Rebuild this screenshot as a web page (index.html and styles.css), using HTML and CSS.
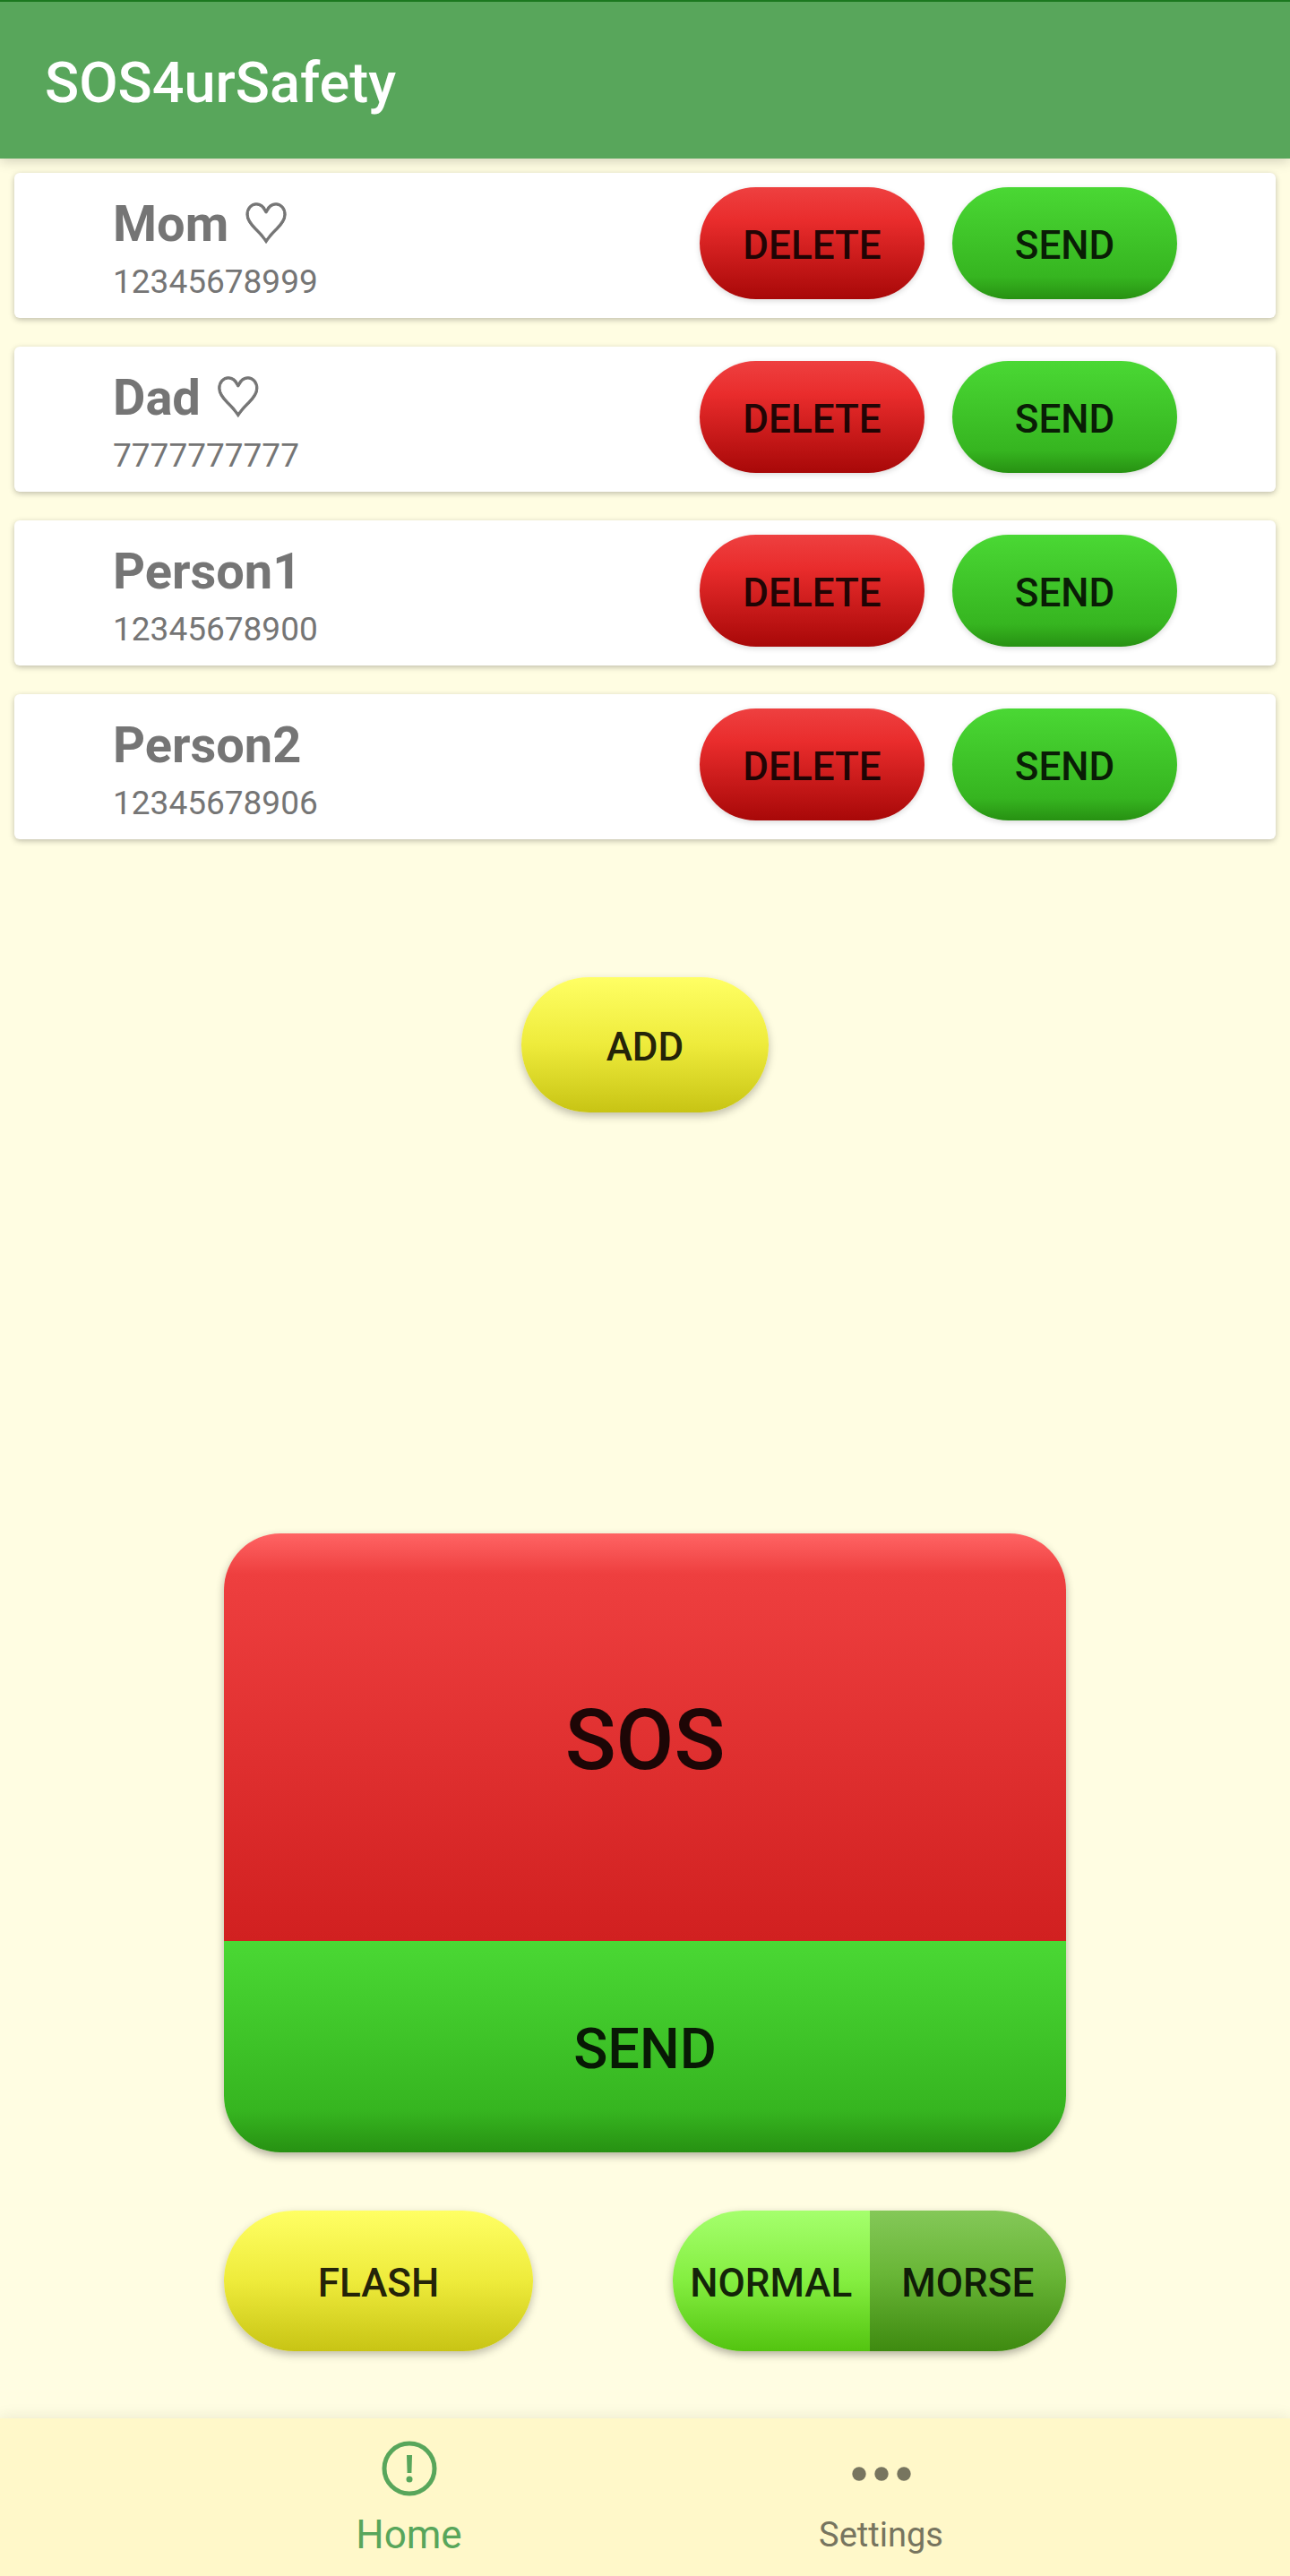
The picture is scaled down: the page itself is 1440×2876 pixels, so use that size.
FILE: index.html
```html
<!DOCTYPE html>
<html lang="en">
<head>
<meta charset="utf-8">
<meta name="viewport" content="width=device-width, initial-scale=1">
<title>SOS4urSafety</title>
<link rel="stylesheet" href="styles.css">
</head>
<body>
<div class="app">
  <header class="app-bar">
    <h1 class="app-title">SOS4urSafety</h1>
  </header>

  <main class="content">
    <ul class="contacts">
      <li class="contact">
        <div class="contact-info">
          <h2 class="contact-name">Mom <span class="heart">♡</span></h2>
          <p class="contact-phone">12345678999</p>
        </div>
        <button type="button" class="btn btn-row btn-delete">DELETE</button>
        <button type="button" class="btn btn-row btn-send">SEND</button>
      </li>
      <li class="contact">
        <div class="contact-info">
          <h2 class="contact-name">Dad <span class="heart">♡</span></h2>
          <p class="contact-phone">7777777777</p>
        </div>
        <button type="button" class="btn btn-row btn-delete">DELETE</button>
        <button type="button" class="btn btn-row btn-send">SEND</button>
      </li>
      <li class="contact">
        <div class="contact-info">
          <h2 class="contact-name">Person1</h2>
          <p class="contact-phone">12345678900</p>
        </div>
        <button type="button" class="btn btn-row btn-delete">DELETE</button>
        <button type="button" class="btn btn-row btn-send">SEND</button>
      </li>
      <li class="contact">
        <div class="contact-info">
          <h2 class="contact-name">Person2</h2>
          <p class="contact-phone">12345678906</p>
        </div>
        <button type="button" class="btn btn-row btn-delete">DELETE</button>
        <button type="button" class="btn btn-row btn-send">SEND</button>
      </li>
    </ul>

    <button type="button" class="btn btn-yellow btn-add">ADD</button>

    <section class="controls">
      <div class="alarm">
        <button type="button" class="btn alarm-sos">SOS</button>
        <button type="button" class="btn btn-send alarm-send">SEND</button>
      </div>
      <div class="modes">
        <button type="button" class="btn btn-yellow btn-flash">FLASH</button>
        <div class="toggle">
          <button type="button" class="btn toggle-normal">NORMAL</button>
          <button type="button" class="btn toggle-morse">MORSE</button>
        </div>
      </div>
    </section>
  </main>

  <nav class="bottom-nav">
    <a href="#home" class="nav-item nav-active">
      <svg class="nav-icon" viewBox="0 0 72 72" aria-hidden="true">
        <circle cx="36" cy="36" r="28" fill="none" stroke="currentColor" stroke-width="5"/>
        <path d="M33 21h6l-.6 20h-4.800z" fill="currentColor"/>
        <circle cx="36" cy="48" r="3.500" fill="currentColor"/>
      </svg>
      <span>Home</span>
    </a>
    <a href="#settings" class="nav-item">
      <svg class="nav-icon" viewBox="0 0 72 72" aria-hidden="true">
        <g fill="currentColor">
          <circle cx="11" cy="42" r="7.700"/>
          <circle cx="36" cy="42" r="7.700"/>
          <circle cx="61" cy="42" r="7.700"/>
        </g>
      </svg>
      <span>Settings</span>
    </a>
  </nav>
</div>
</body>
</html>
```
FILE: styles.css
```css
* {
  box-sizing: border-box;
}

body {
  margin: 0;
  background: #fffde2;
  font-family: Roboto, "Liberation Sans", sans-serif;
}

.app {
  display: flex;
  flex-direction: column;
  min-height: 100vh;
}

/* Top bar */
.app-bar {
  display: flex;
  align-items: center;
  height: 177px;
  padding: 6px 50px 0;
  border-top: 2px solid #1b781f;
  background: #58a65b;
  box-shadow: 0 2px 14px rgba(0, 0, 0, 0.2);
}

.app-title {
  margin: 0;
  color: #fff;
  font-size: 63px;
  font-weight: 500;
  line-height: 76px;
}

.content {
  display: flex;
  flex: 1;
  flex-direction: column;
  align-items: center;
  padding: 16px 16px 75px;
}

/* Contact list */
.contacts {
  display: flex;
  flex-direction: column;
  align-self: stretch;
  gap: 32px;
  margin: 0;
  padding: 0;
  list-style: none;
}

.contact {
  display: flex;
  align-items: flex-start;
  gap: 31px;
  height: 162px;
  padding: 16px 110px 0;
  border-radius: 6px;
  background: #fff;
  box-shadow: 0 2px 6px rgba(0, 0, 0, 0.25);
}

.contact-info {
  flex: 1;
  padding-top: 5px;
  color: #757575;
}

.contact-name {
  margin: 0;
  font-size: 56px;
  font-weight: 700;
  line-height: 72px;
}

.heart {
  margin-left: 2px;
  font-family: "Noto Sans CJK JP", "DejaVu Sans", sans-serif;
  font-size: 52px;
  font-weight: 700;
  line-height: 1;
  -webkit-text-stroke: 1px currentColor;
}

.contact-phone {
  margin: 0;
  font-size: 37px;
  line-height: 58px;
}

/* Buttons */
.btn {
  padding: 5px 0 0;
  border: 0;
  color: rgba(0, 0, 0, 0.87);
  font: 500 44px Roboto, "Liberation Sans", sans-serif;
  cursor: pointer;
}

.btn-row {
  width: 251px;
  height: 125px;
  border-radius: 63px;
  box-shadow: 0 2px 6px rgba(0, 0, 0, 0.15);
}

.btn-delete {
  background: linear-gradient(#ee4040, #e92c2c 30%, #a80808);
}

.btn-send {
  background: linear-gradient(#4ad834, #36b520 80%, #279112);
}

.btn-yellow {
  background: linear-gradient(#ffff64, #eeeb3b 50%, #c8c414);
  box-shadow: 0 4px 10px rgba(0, 0, 0, 0.25);
}

.btn-add {
  width: 276px;
  height: 151px;
  margin: 154px 0;
  border-radius: 76px;
}

/* SOS panel and signal modes */
.controls {
  display: flex;
  flex-direction: column;
  align-self: stretch;
  gap: 65px;
  margin-top: auto;
  padding: 0 234px;
}

.alarm {
  display: flex;
  flex-direction: column;
  overflow: hidden;
  border-radius: 63px;
  box-shadow: 0 4px 10px rgba(0, 0, 0, 0.3);
}

.alarm-sos {
  height: 455px;
  padding-top: 7px;
  background: linear-gradient(#ff6464, #ee3f3f 10%, #d12020);
  font-size: 94px;
}

.alarm-send {
  height: 236px;
  font-size: 63px;
}

.modes {
  display: flex;
  justify-content: space-between;
}

.btn-flash {
  width: 345px;
  height: 157px;
  border-radius: 79px;
}

.toggle {
  display: flex;
  width: 439px;
  height: 157px;
  overflow: hidden;
  border-radius: 79px;
  box-shadow: 0 4px 10px rgba(0, 0, 0, 0.3);
}

.toggle-normal,
.toggle-morse {
  flex: 1;
}

.toggle-normal {
  background: linear-gradient(#a5ff6d, #84ee40 50%, #53c410);
}

.toggle-morse {
  background: linear-gradient(#84c858, #69b637 45%, #3e8a10);
}

/* Bottom navigation */
.bottom-nav {
  display: flex;
  justify-content: center;
  height: 176px;
  padding-top: 20px;
  background: #fff8c9;
  box-shadow: 0 -2px 16px rgba(0, 0, 0, 0.08);
}

.nav-item {
  display: flex;
  flex: 0 1 527px;
  flex-direction: column;
  align-items: center;
  gap: 10px;
  color: #77755f;
  font-size: 38px;
  line-height: 56px;
  text-decoration: none;
}

.nav-active {
  color: #58a65b;
  font-size: 44px;
}

.nav-icon {
  width: 72px;
  height: 72px;
}
```
